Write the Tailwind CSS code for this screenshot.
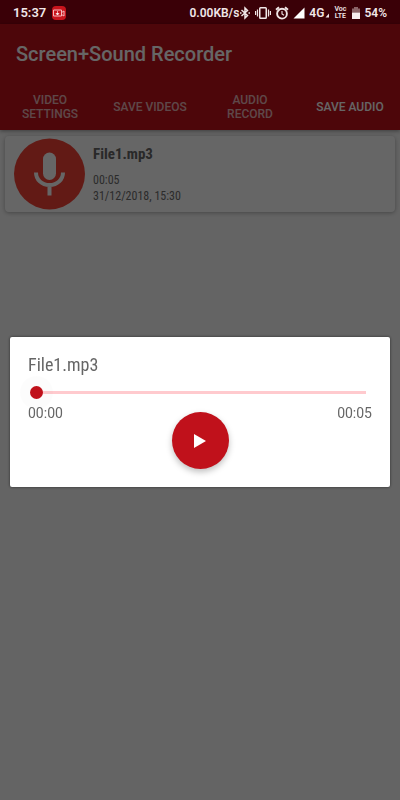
<!DOCTYPE html>
<html lang="en">
<head>
<meta charset="utf-8">
<meta name="viewport" content="width=device-width, initial-scale=1">
<title>Screen+Sound Recorder</title>
<script src="https://cdn.jsdelivr.net/npm/@tailwindcss/browser@4"></script>
</head>
<body class="flex min-h-screen flex-col bg-[#fafafa] font-['Roboto',sans-serif]">
  <!-- System status bar -->
  <div class="flex h-6 items-center bg-[#3a0007] px-[13px] pt-px text-xs font-semibold text-[#f0e6e7]">
    <span class="text-[13px]">15:37</span>
    <svg class="ml-1.5 size-3.5" viewBox="0 0 14 14" aria-hidden="true">
      <rect width="14" height="14" rx="4" fill="#c8141c"/>
      <path d="M1.500 4h8v6h-8zM9.500 6.500l2.500-1.500v5l-2.500-1.500" fill="none" stroke="#f3b9bb"/>
      <path d="M5.500 5v3M4 7.500h3l-1.500 1.500z" fill="#fff" stroke="#fff" stroke-width=".6"/>
    </svg>
    <span class="ml-auto">0.00KB/s</span>
    <svg class="h-3.5 w-3" viewBox="0 0 12 14" aria-hidden="true" fill="none" stroke="#f0e6e7" stroke-width="1.500">
      <path d="M2.500 4l6 5.500L6 12V2l2.500 2.500L2.500 10"/>
      <path d="M1 7h1.500M9.500 7H11"/>
    </svg>
    <svg class="ml-1 h-3.5 w-4" viewBox="0 0 16 14" aria-hidden="true" fill="none" stroke="#f0e6e7">
      <rect x="4.750" y="1.750" width="6.500" height="10.500" rx=".8" stroke-width="1.500"/>
      <path d="M2.500 3.500v7M.6 5v4M13.500 3.500v7M15.400 5v4" stroke-width="1.200"/>
    </svg>
    <svg class="ml-1 size-3.5" viewBox="0 0 14 14" aria-hidden="true" fill="none" stroke="#f0e6e7" stroke-width="1.900">
      <circle cx="7" cy="7.700" r="4.900"/>
      <path d="M1 3.700l3-2.500M13 3.700l-3-2.500"/>
      <path d="M7 5v3l2 1.200" stroke-width="1.100"/>
    </svg>
    <svg class="ml-1 h-3 w-3" viewBox="0 0 12 12" aria-hidden="true"><path d="M0.500 11.500L11.500 0.500v11z" fill="#fff"/></svg>
    <span class="ml-1">4G</span>
    <svg class="h-3 w-1.5" viewBox="0 0 6 12" aria-hidden="true"><path d="M1.500 10.500l3.500-4v4z" fill="#f0e6e7"/></svg>
    <span class="ml-1 text-center text-[7px] leading-[7px]">Voc<br>LTE</span>
    <svg class="ml-1.5 h-3 w-2" viewBox="0 0 8 12" aria-hidden="true">
      <path d="M2 0h4v1.500h2v4H0v-4h2z" fill="#8b6468"/><path d="M0 5.500h8V12H0z" fill="#f7eff0"/>
    </svg>
    <span class="ml-1">54%</span>
  </div>

  <header class="bg-[#c0111b] shadow-[0_1px_4px_rgba(0,0,0,0.4)]">
    <h1 class="flex h-[59px] items-center px-4 text-xl font-medium text-white">Screen+Sound Recorder</h1>
    <nav class="grid h-[47px] grid-cols-4 text-center text-xs leading-[14px] font-medium text-white/70">
      <a href="#settings" class="grid place-items-center px-4">VIDEO SETTINGS</a>
      <a href="#videos" class="grid place-items-center">SAVE VIDEOS</a>
      <a href="#record" class="grid place-items-center px-4">AUDIO RECORD</a>
      <a href="#audio" aria-current="page" class="grid place-items-center text-white">SAVE AUDIO</a>
    </nav>
  </header>

  <main class="px-[5px] pt-1.5">
    <article class="flex h-[76px] items-center gap-2 rounded bg-white px-2 shadow-[0_1px_4px_rgba(0,0,0,0.3)]">
      <svg class="size-[72px]" viewBox="0 0 72 72" aria-hidden="true">
        <circle cx="36.500" cy="36" r="35.500" fill="#f44336"/>
        <rect x="30" y="14.500" width="13" height="27.500" rx="6.500" fill="#fff"/>
        <path d="M23 34.500c0 7 5.500 12.500 13.500 12.500s13.500-5.500 13.500-12.500M36.500 47v10.500" fill="none" stroke="#fff" stroke-width="4"/>
      </svg>
      <div class="font-['Roboto_Condensed','Roboto',sans-serif] text-xs leading-4 text-[#6e6e6e]">
        <h2 class="mb-2 text-[15px] leading-5 font-bold text-[#666]">File1.mp3</h2>
        <p>00:05</p>
        <p>31/12/2018, 15:30</p>
      </div>
    </article>
  </main>

  <!-- Player dialog over the dimmed page -->
  <div class="fixed inset-x-0 top-6 bottom-0 grid items-center bg-black/60 px-2.5">
    <section role="dialog" aria-labelledby="track" class="h-[150px] rounded-xs bg-white px-[18px] pt-4 text-sm leading-5 text-[#666] shadow-[0_0_3px_rgba(0,0,0,0.6)]">
      <h2 id="track" class="font-['Roboto_Condensed','Roboto',sans-serif] text-lg leading-6">File1.mp3</h2>
      <input type="range" aria-label="Playback position" min="0" max="5" value="0" class="ml-0.5 mt-[7px] block h-4 w-[calc(100%-2px)] appearance-none bg-[linear-gradient(#ffcace,#ffcace)] bg-[length:calc(100%-13px)_3px] bg-center bg-no-repeat [&::-webkit-slider-thumb]:size-[13px] [&::-webkit-slider-thumb]:appearance-none [&::-webkit-slider-thumb]:rounded-full [&::-webkit-slider-thumb]:bg-[#c0111b] [&::-webkit-slider-thumb]:shadow-[0_0_0_10px_rgba(0,0,0,0.01)]">
      <div class="flex items-start justify-between pt-[3px]">
        <span>00:00</span>
        <span>00:05</span>
      </div>
      <button type="button" aria-label="Play" class="relative mx-auto -mt-[11px] grid size-[57px] place-items-center rounded-full bg-[#c0111b] shadow-[0_3px_6px_rgba(0,0,0,0.25)]">
        <svg class="h-3.5 w-3" viewBox="0 0 12 14" aria-hidden="true"><path d="M0 0l12 7-12 7z" fill="#fff"/></svg>
      </button>
    </section>
  </div>
</body>
</html>
